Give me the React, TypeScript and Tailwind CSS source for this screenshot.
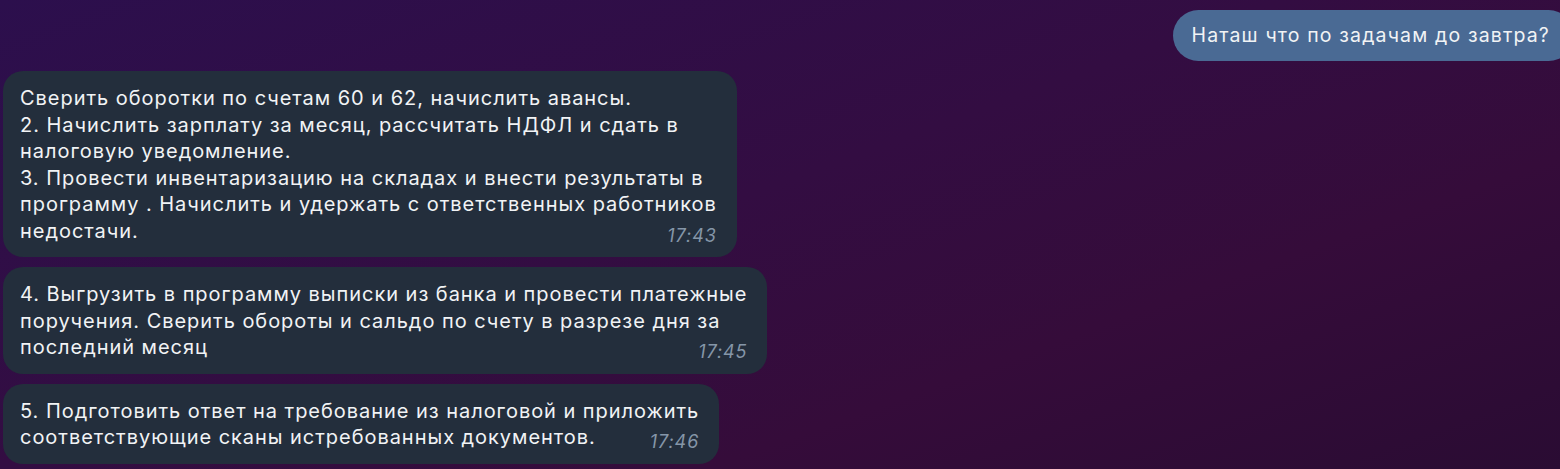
const font = { fontFamily: "Inter, 'Noto Sans', sans-serif" };

type Msg = {
  lines: string[];
  time: string;
};

const incoming: Msg[] = [
  {
    lines: [
      "Сверить оборотки по счетам 60 и 62, начислить авансы.",
      "2. Начислить зарплату за месяц, рассчитать НДФЛ и сдать в",
      "налоговую уведомление.",
      "3. Провести инвентаризацию на складах и внести результаты в",
      "программу . Начислить и удержать с ответственных работников",
      "недостачи.",
    ],
    time: "17:43",
  },
  {
    lines: [
      "4. Выгрузить в программу выписки из банка и провести платежные",
      "поручения. Сверить обороты и сальдо по счету в разрезе дня за",
      "последний месяц",
    ],
    time: "17:45",
  },
  {
    lines: [
      "5. Подготовить ответ на требование из налоговой и приложить",
      "соответствующие сканы истребованных документов.",
    ],
    time: "17:46",
  },
];

function Bubble({ msg }: { msg: Msg }) {
  const last = msg.lines.length - 1;
  return (
    <div className="w-fit rounded-[20px] bg-[#232e3c] pl-[17px] pr-[20px] pt-[14px] pb-[12px] text-[20px] leading-[26.5px] text-[#f1f3f5] tracking-[0.96px]">
      {msg.lines.map((l, i) =>
        i < last ? (
          <div key={i} className="whitespace-nowrap">
            {l}
          </div>
        ) : (
          <div key={i} className="flex items-baseline whitespace-nowrap">
            <span>{l}</span>
            <span className="ml-auto pl-[50px] text-[18px] italic text-[#8596a8] tracking-[0.9px] translate-y-[4px]">
              {msg.time}
            </span>
          </div>
        )
      )}
    </div>
  );
}

export default function App() {
  return (
    <div
      style={font}
      className="h-[469px] w-[1560px] overflow-hidden bg-[linear-gradient(160deg,#2c0f4d_0%,#330d42_45%,#350c3a_70%,#2a0c33_100%)]"
    >
      <div className="flex justify-end pt-[10px]">
        <div className="-mr-[14px] rounded-l-[26px] rounded-r-[26px] bg-[#4a6a94] pl-[19px] pr-[24px] h-[51px] flex items-center text-[19.5px] tracking-[1.15px] text-[#f1f3f5] whitespace-nowrap">
          Наташ что по задачам до завтра?
        </div>
      </div>
      <div className="flex flex-col gap-[10px] pl-[3px] pt-[10px]">
        {incoming.map((m, i) => (
          <Bubble key={i} msg={m} />
        ))}
      </div>
    </div>
  );
}
